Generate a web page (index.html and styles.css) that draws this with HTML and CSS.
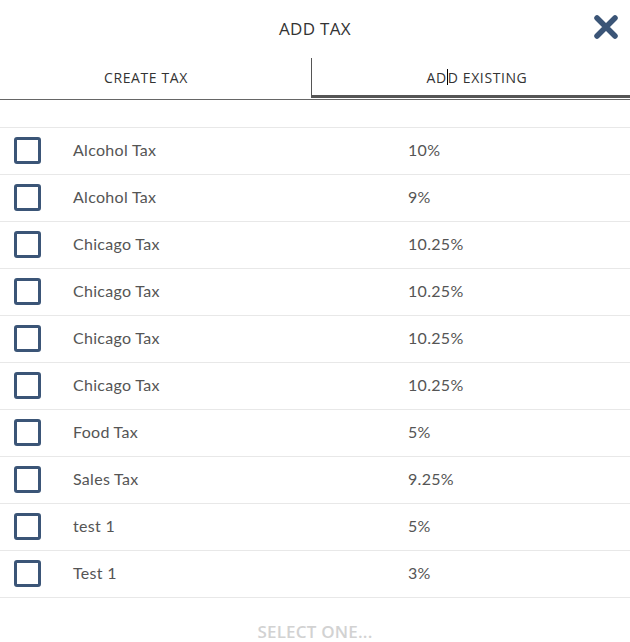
FILE: index.html
```html
<!DOCTYPE html>
<html>
<head>
<meta charset="utf-8">
<link rel="stylesheet" href="styles.css">
</head>
<body>
<div class="modal">
  <header class="header">
    <h1 class="title">ADD TAX</h1>
    <button class="close" aria-label="Close">
      <svg width="26" height="24" viewBox="0 0 26 24"><path d="M4 3 L22 21 M22 3 L4 21" stroke="#3b5577" stroke-width="5.5" stroke-linecap="round"/></svg>
    </button>
  </header>
  <div class="tabs">
    <div class="tab">CREATE TAX</div>
    <div class="tab active">AD<span class="caret"></span>D EXISTING</div>
  </div>
  <ul class="list">
    <li class="row"><span class="check"></span><span class="name">Alcohol Tax</span><span class="rate">10%</span></li>
    <li class="row"><span class="check"></span><span class="name">Alcohol Tax</span><span class="rate">9%</span></li>
    <li class="row"><span class="check"></span><span class="name">Chicago Tax</span><span class="rate">10.25%</span></li>
    <li class="row"><span class="check"></span><span class="name">Chicago Tax</span><span class="rate">10.25%</span></li>
    <li class="row"><span class="check"></span><span class="name">Chicago Tax</span><span class="rate">10.25%</span></li>
    <li class="row"><span class="check"></span><span class="name">Chicago Tax</span><span class="rate">10.25%</span></li>
    <li class="row"><span class="check"></span><span class="name">Food Tax</span><span class="rate">5%</span></li>
    <li class="row"><span class="check"></span><span class="name">Sales Tax</span><span class="rate">9.25%</span></li>
    <li class="row"><span class="check"></span><span class="name">test 1</span><span class="rate">5%</span></li>
    <li class="row"><span class="check"></span><span class="name">Test 1</span><span class="rate">3%</span></li>
  </ul>
  <div class="footer">SELECT ONE...</div>
</div>
</body>
</html>
```
FILE: styles.css
```css
html, body {
  margin: 0;
  padding: 0;
  background: #fff;
}
.modal {
  width: 630px;
  height: 642px;
  overflow: hidden;
  font-family: "Open Sans", "Liberation Sans", sans-serif;
  color: #333;
}
.header {
  height: 58px;
  display: flex;
  align-items: center;
  justify-content: center;
  position: relative;
}
.title {
  margin: 0 0 2px 0;
  font-size: 17px;
  font-weight: 400;
  letter-spacing: 0.3px;
  color: #333;
}
.close {
  position: absolute;
  right: 11px;
  top: 15px;
  border: 0;
  background: none;
  padding: 0;
  width: 26px;
  height: 24px;
  display: block;
}
.close svg { display: block; }
.tabs {
  display: flex;
  border-bottom: 1px solid #666;
  padding-bottom: 1px;
}
.tab {
  height: 40px;
  display: flex;
  align-items: center;
  justify-content: center;
  font-size: 14px;
  letter-spacing: 0.6px;
  color: #333;
  box-sizing: border-box;
}
.tab:first-child {
  width: 311px;
  padding-right: 19px;
  padding-bottom: 2px;
}
.tab.active {
  width: 319px;
  padding-left: 12px;
  padding-top: 1px;
  border-left: 1px solid #555;
  border-bottom: 3px solid #555;
}
.caret {
  display: inline-block;
  width: 1px;
  height: 16px;
  background: #000;
  vertical-align: middle;
}
.list {
  list-style: none;
  margin: 27px 0 0 0;
  padding: 0;
  border-top: 1px solid #e8e8e8;
}
.row {
  height: 46px;
  border-bottom: 1px solid #e8e8e8;
  display: flex;
  align-items: center;
  font-family: Lato, "Open Sans", sans-serif;
  font-size: 16px;
  color: #555;
}
.check {
  width: 27px;
  height: 27px;
  box-sizing: border-box;
  border: 3px solid #3b5577;
  border-radius: 3px;
  margin-left: 14px;
  margin-top: -1px;
}
.name {
  margin-left: 32px;
  margin-bottom: 4px;
  width: 335px;
  letter-spacing: 0.3px;
}
.rate {
  margin-bottom: 4px;
  letter-spacing: 0.3px;
}
.footer {
  text-align: center;
  font-size: 17px;
  font-weight: 600;
  letter-spacing: 0.2px;
  color: #d2d2d2;
  padding-top: 22px;
}
```
